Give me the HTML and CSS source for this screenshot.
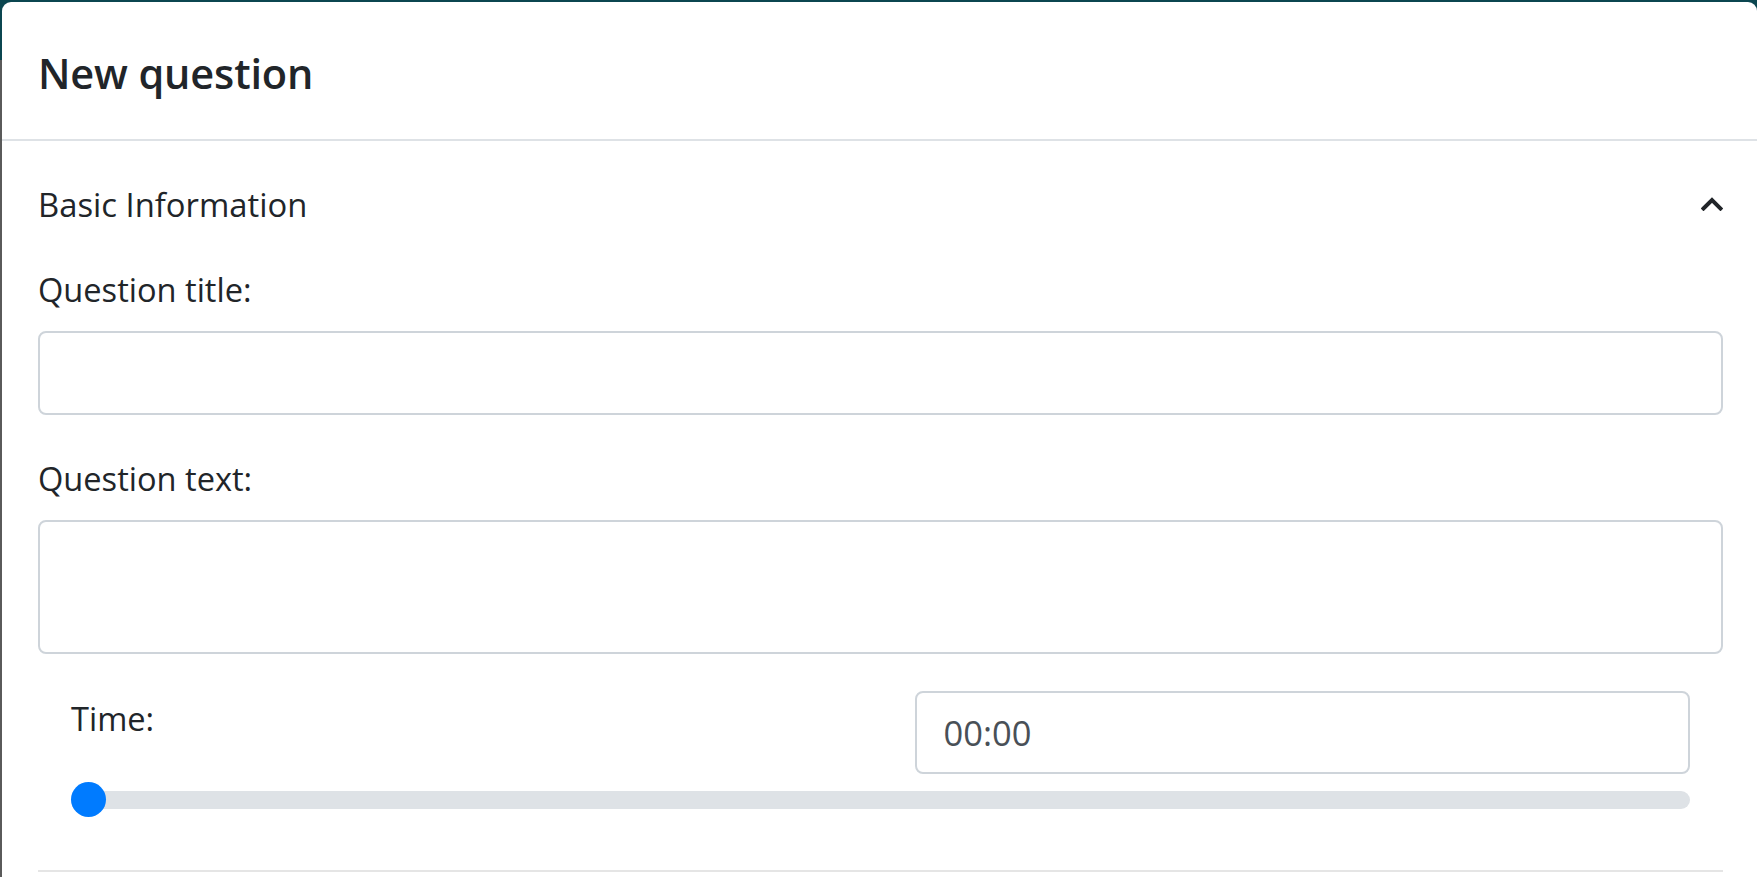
FILE: index.html
```html
<!DOCTYPE html>
<html lang="en">
<head>
<meta charset="utf-8">
<title>New question</title>
<link rel="stylesheet" href="styles.css">
</head>
<body>
<div class="modal">
  <div class="modal-header">
    <h5 class="modal-title">New question</h5>
  </div>
  <div class="modal-body">
    <div class="section-head">
      <span class="section-title">Basic Information</span>
      <svg class="chevron" width="22" height="14" viewBox="0 0 22 14" aria-hidden="true">
        <polyline points="2.5,11.5 11,3 19.5,11.5" fill="none" stroke="#212529" stroke-width="4" stroke-linecap="square" stroke-linejoin="miter"/>
      </svg>
    </div>
    <div class="form-group">
      <label class="form-label">Question title:</label>
      <div class="form-control input"></div>
    </div>
    <div class="form-group group-text">
      <label class="form-label">Question text:</label>
      <div class="form-control textarea"></div>
    </div>
    <div class="time-block">
      <div class="time-row">
        <label class="time-label">Time:</label>
        <div class="form-control time-input">00:00</div>
      </div>
      <div class="range">
        <div class="range-track"></div>
        <div class="range-thumb"></div>
      </div>
    </div>
    <div class="divider"></div>
  </div>
</div>
</body>
</html>
```
FILE: styles.css
```css
html, body {
  margin: 0;
  padding: 0;
  height: 100%;
  overflow: hidden;
}
body {
  background: linear-gradient(#0b4650 0, #0b4650 60px, #5a5a5a 60px, #5a5a5a 100%);
  font-family: "Open Sans", "Noto Sans", sans-serif;
  color: #212529;
}
.modal {
  margin: 2px 0 0 2px;
  background: #fff;
  border-radius: 9px 9px 0 0;
  height: calc(100% - 2px);
  box-sizing: border-box;
}
.modal-header {
  height: 131px;
  border-bottom: 2px solid #dee2e6;
  padding: 6px 36px 0 36px;
  display: flex;
  align-items: center;
  box-sizing: content-box;
}
.modal-title {
  margin: 0;
  font-size: 41.5px;
  font-weight: 600;
  line-height: 1.2;
  letter-spacing: -0.15px;
}
.modal-body {
  padding: 0 34px 0 36px;
}
.section-head {
  display: flex;
  align-items: center;
  justify-content: space-between;
  padding-top: 43px;
  height: 42px;
}
.section-title {
  font-size: 32.8px;
  line-height: 42px;
}
.chevron {
  display: block;
  margin-top: -2px;
}
.form-group {
  display: flex;
  flex-direction: column;
  margin-top: 43px;
}
.group-text {
  margin-top: 43px;
}
.form-label {
  font-size: 32.6px;
  line-height: 42px;
  margin-bottom: 20px;
}
.form-control {
  border: 2px solid #ced4da;
  border-radius: 8px;
  background: #fff;
  box-sizing: border-box;
}
.input {
  height: 84px;
}
.textarea {
  height: 134px;
}
.time-block {
  padding: 0 33px;
  margin-top: 37px;
}
.time-row {
  display: grid;
  grid-template-columns: 1fr 1fr;
  column-gap: 68px;
  align-items: start;
}
.time-label {
  font-size: 32.6px;
  line-height: 42px;
  padding-top: 7px;
}
.time-input {
  height: 83px;
  padding-left: 27px;
  display: flex;
  align-items: center;
  font-size: 34.5px;
  color: #495057;
}
.range {
  position: relative;
  height: 35px;
  margin-top: 8px;
}
.range-track {
  position: absolute;
  left: 0;
  right: 0;
  top: 9px;
  height: 18px;
  border-radius: 9px;
  background: #dee2e6;
}
.range-thumb {
  position: absolute;
  left: 0;
  top: 0;
  width: 35px;
  height: 35px;
  border-radius: 50%;
  background: #007bff;
}
.divider {
  margin-top: 53px;
  height: 2px;
  background: #e5e5e5;
}
```
